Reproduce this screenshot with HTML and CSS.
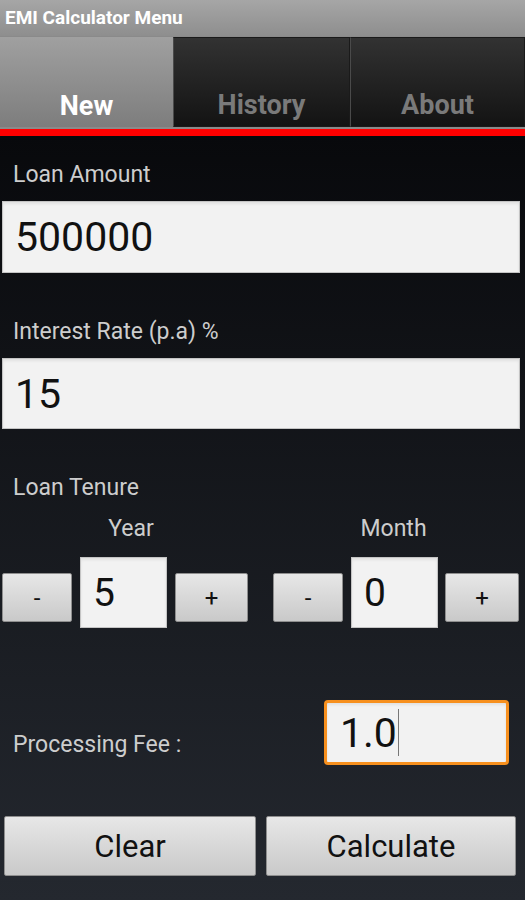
FILE: index.html
```html
<!DOCTYPE html>
<html>
<head>
<meta http-equiv="Content-Type" content="text/html; charset=utf-8"/>
<title>EMI Calculator Menu</title>
<link rel="stylesheet" href="styles.css">
</head>
<body>

<div class="titlebar">EMI Calculator Menu</div>

<div class="tabs">
  <div class="tab tab-new selected">New</div>
  <div class="tab tab-history">History</div>
  <div class="tab tab-about">About</div>
</div>
<div class="tab-line"></div>

<div class="form">
  <div class="label first">Loan Amount</div>
  <div class="field big">500000</div>

  <div class="label">Interest Rate (p.a) %</div>
  <div class="field big short">15</div>

  <div class="label">Loan Tenure</div>
  <div class="tenure">
    <div class="tenure-col col-year">
      <div class="tenure-label">Year</div>
      <div class="spinner">
        <div class="btn btn-small minus">-</div>
        <div class="field num">5</div>
        <div class="btn btn-small plus">+</div>
      </div>
    </div>
    <div class="tenure-col col-month">
      <div class="tenure-label">Month</div>
      <div class="spinner">
        <div class="btn btn-small minus">-</div>
        <div class="field num">0</div>
        <div class="btn btn-small plus plus-right">+</div>
      </div>
    </div>
  </div>

  <div class="fee-row">
    <div class="label fee-label">Processing Fee :</div>
    <div class="field fee focused">1.0<span class="cursor"></span></div>
  </div>

  <div class="actions">
    <div class="btn btn-wide">Clear</div>
    <div class="btn btn-wide btn-calc">Calculate</div>
  </div>
</div>

</body>
</html>
```

FILE: styles.css
```css
html, body {
   margin: 0;
   padding: 0;
}

body {
   width: 525px;
   height: 900px;
   overflow: hidden;
   font-family: Roboto, "Liberation Sans", sans-serif;
   background: linear-gradient(#08090c 15%, #24282f 100%);
}

/* title + tabs */

.titlebar {
   height: 36px;
   line-height: 36px;
   padding-left: 5px;
   font-size: 19px;
   font-weight: bold;
   color: #fff;
   background: linear-gradient(#a6a6a6, #8e8e8e);
}

.tabs {
   display: flex;
   height: 90px;
   padding-top: 1px;
   padding-bottom: 2px;
   background: #8a8a8a;
}

.tab {
   display: flex;
   align-items: flex-end;
   justify-content: center;
   box-sizing: border-box;
   padding-bottom: 6px;
   font-size: 27px;
   line-height: 30px;
   font-weight: bold;
   color: #7a7a7a;
   background: linear-gradient(#323232, #131313);
   border: 1px solid #1a1a1a;
   border-left-color: #4a4a4a;
}

.tab-new {
   width: 173px;
   border: none;
}

.tab-history {
   width: 177px;
}

.tab-about {
   flex: 1;
}

.tab.selected {
   color: #fff;
   background: linear-gradient(#a0a0a0, #7d7d7d);
}

.tab-line {
   height: 7px;
   background: #ff0000;
}

/* form */

.form {
   display: flex;
   flex-direction: column;
}

.label {
   margin: 46px 0 13px 13px;
   font-size: 23px;
   line-height: 26px;
   color: #cdcdcd;
}

.label.first {
   margin-top: 26px;
}

.field {
   display: flex;
   align-items: center;
   box-sizing: border-box;
   padding-left: 12px;
   color: #111;
   background: #f2f2f2;
   border: 1px solid #c4c4c4;
   box-shadow: inset 0 2px 3px rgba(0, 0, 0, 0.07);
}

.field.big {
   height: 72px;
   margin: 0 5px 0 2px;
   font-size: 41px;
}

.field.short {
   height: 71px;
}

/* tenure */

.tenure {
   display: flex;
}

.tenure-col {
   display: flex;
   flex-direction: column;
   width: 262px;
}

.col-month {
   width: 263px;
}

.tenure-label {
   margin-top: 2px;
   text-align: center;
   font-size: 23px;
   line-height: 26px;
   color: #cdcdcd;
}

.spinner {
   display: flex;
   align-items: flex-end;
   gap: 8px;
   margin-top: 15px;
   padding-left: 2px;
}

.col-month .spinner {
   padding-left: 11px;
}

.field.num {
   width: 87px;
   height: 71px;
   font-size: 39px;
}

.btn {
   display: flex;
   align-items: center;
   justify-content: center;
   box-sizing: border-box;
   color: #111;
   background: linear-gradient(#e7e7e7, #c9c9c9);
   border: 1px solid #8e8e8e;
   border-radius: 2px;
}

.btn-small {
   height: 49px;
   margin-bottom: 6px;
   font-size: 24px;
}

.minus {
   width: 70px;
}

.plus {
   width: 73px;
}

.plus-right {
   width: 74px;
   margin-left: -1px;
}

/* processing fee */

.fee-row {
   display: flex;
   align-items: flex-end;
   justify-content: space-between;
   margin-top: 72px;
}

.label.fee-label {
   margin: 0 0 7px 13px;
}

.field.fee {
   width: 185px;
   height: 65px;
   margin-right: 16px;
   padding-left: 13px;
   font-size: 41px;
   border: 3px solid #f7901e;
   border-radius: 4px;
}

.cursor {
   display: inline-block;
   width: 1px;
   height: 47px;
   margin-left: 1px;
   background: #777;
}

/* bottom buttons */

.actions {
   display: flex;
   gap: 10px;
   margin-top: 51px;
   padding: 0 9px 0 4px;
}

.btn-wide {
   width: 252px;
   height: 60px;
   font-size: 31px;
}

.btn-calc {
   width: 250px;
}
```
